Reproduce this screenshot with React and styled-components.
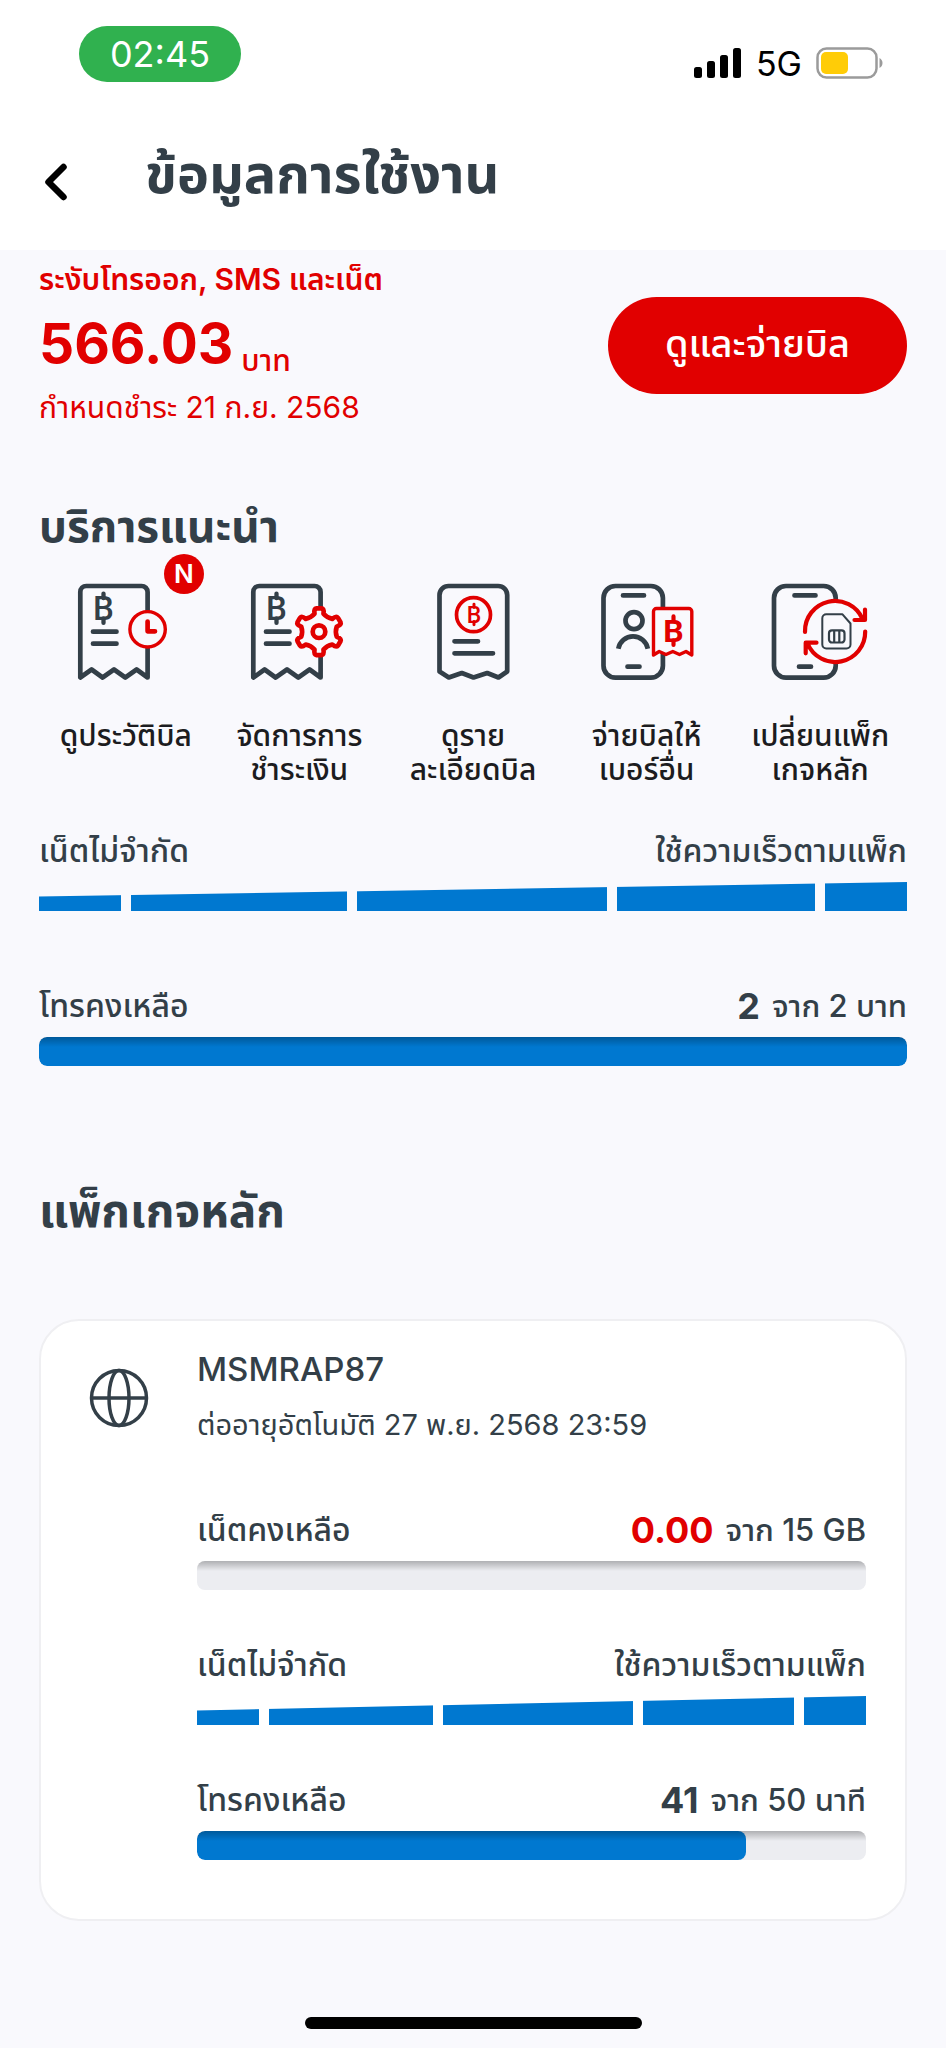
import React from 'react';
import styled, { createGlobalStyle } from 'styled-components';

const GlobalStyle = createGlobalStyle`
    * {
        box-sizing: border-box;
    }
    body {
        margin: 0;
        background: #f9f9fd;
        color: #333f48;
        font-family: Inter, "Noto Sans Thai", "Noto Sans", sans-serif;
    }
    h1, h2, h3, p {
        margin: 0;
    }
    button {
        border: 0;
        padding: 0;
        background: none;
        font-family: inherit;
        cursor: pointer;
    }
`;

const TopArea = styled.header`
    background: #fff;
`;

const StatusBar = styled.div`
    display: flex;
    justify-content: space-between;
    padding: 26px 63px 0 79px;
`;

const Clock = styled.div`
    width: 162px;
    border-radius: 28px;
    background: #30b14f;
    color: #fff;
    font-size: 36px;
    line-height: 56px;
    text-align: center;
`;

const Signals = styled.div`
    display: flex;
    align-items: center;
    gap: 14px;
    height: 34px;
    margin-top: 20px;
    color: #000;
    font-size: 34px;
`;

const TitleBar = styled.div`
    display: flex;
    align-items: center;
    height: 168px;
    padding: 0 39px;
    gap: 72px;
`;

const BackButton = styled.button`
    display: flex;
    width: 34px;
    height: 40px;
    margin-top: 32px;
`;

const Title = styled.h1`
    font-size: 54px;
    line-height: 72px;
    margin-top: 16px;
`;

const Main = styled.main`
    padding: 10px 39px 0;
`;

const Bill = styled.section`
    display: flex;
    justify-content: space-between;
    align-items: center;
    color: #e10000;
`;

const BillText = styled.p`
    font-size: 30px;
    font-weight: ${props => props.$strong ? 600 : 400};
    line-height: 38px;
`;

const Amount = styled.p`
    display: flex;
    align-items: flex-end;
    gap: 8px;
    font-size: 55px;
    font-weight: 700;
    line-height: 90px;
`;

const Unit = styled.span`
    font-size: 30px;
    font-weight: 500;
    line-height: 56px;
`;

const PayButton = styled.button`
    width: 299px;
    height: 97px;
    margin-top: 4px;
    border-radius: 49px;
    background: #e10000;
    color: #fff;
    font-size: 38px;
    font-weight: 500;
`;

const SectionTitle = styled.h2`
    margin-top: ${props => props.$large ? 116 : 72}px;
    font-size: ${props => props.$large ? 46 : 44}px;
    line-height: 56px;
`;

const Services = styled.div`
    display: grid;
    grid-template-columns: repeat(5, 1fr);
    align-items: start;
    margin: 28px 0 46px;
`;

const ServiceButton = styled.button`
    display: flex;
    flex-direction: column;
    align-items: center;
    gap: 36px;
    color: #1c1c20;
    font-size: 30px;
    font-weight: 500;
    line-height: 34px;
`;

const IconBox = styled.span`
    position: relative;
    width: 120px;
    height: 100px;
`;

const NewBadge = styled.span`
    position: absolute;
    top: -28px;
    right: -18px;
    width: 40px;
    border-radius: 50%;
    background: #e10000;
    color: #fff;
    font-size: 26px;
    font-weight: 600;
    line-height: 40px;
`;

const ServiceLabel = styled.span`
    white-space: pre-line;
`;

const MeterList = styled.div`
    display: flex;
    flex-direction: column;
    gap: ${props => props.$gap}px;
`;

const MeterHead = styled.div`
    display: flex;
    justify-content: space-between;
    margin-bottom: 12px;
    font-size: 32px;
    font-weight: 500;
    line-height: 38px;
`;

const MeterValue = styled.span`
    display: flex;
    gap: 12px;
    font-size: 31px;
`;

const Remaining = styled.b`
    color: ${props => props.$empty ? '#e10000' : '#333f48'};
    font-size: 36px;
    font-weight: 700;
`;

const Track = styled.div`
    position: relative;
    height: 29px;
    border-radius: 8px;
    background: #ecedf1;
    overflow: hidden;
    &::after {
        content: "";
        position: absolute;
        inset: 0 0 auto;
        height: 10px;
        background: linear-gradient(rgba(0, 0, 0, 0.26), rgba(0, 0, 0, 0));
    }
`;

const Fill = styled.div`
    height: 100%;
    border-radius: 8px;
    background: #0078d0;
`;

const Slope = styled.div`
    display: grid;
    grid-template-columns: 82fr 217fr 251fr 199fr 82fr;
    gap: 10px;
    height: 29px;
    clip-path: polygon(0 50%, 100% 0, 100% 100%, 0 100%);
`;

const SlopePart = styled.span`
    background: #0078d0;
`;

const PackageCard = styled.article`
    display: flex;
    gap: 48px;
    margin-top: 81px;
    padding: 26px 39px 59px 48px;
    border: 2px solid #efeff2;
    border-radius: 40px;
    background: #fff;
`;

const GlobeBox = styled.div`
    width: 60px;
    padding-top: 21px;
`;

const PackageBody = styled.div`
    flex: 1;
`;

const PackageName = styled.h3`
    font-size: 33px;
    font-weight: 500;
    line-height: 44px;
`;

const Renewal = styled.p`
    margin: 14px 0 66px;
    font-size: 29px;
    line-height: 40px;
`;

const HomeIndicator = styled.div`
    width: 337px;
    height: 12px;
    margin: 96px auto 19px;
    border-radius: 6px;
    background: #000;
`;

const DARK = '#333f48';
const RED = '#e10000';
const PAGE = '#f9f9fd';

const BahtMark = ({ x, y, size, color, weight = 500 }) => {
    const cap = size * 0.71;
    return (
        <g>
            <text x={x} y={y} fill={color} fontFamily="Roboto, sans-serif" fontSize={size} fontWeight={weight} textAnchor="middle">B</text>
            <path d={`M${x} ${y - cap - size * 0.09}v${size * 0.14}M${x} ${y - size * 0.05}v${size * 0.14}`} stroke={color} strokeWidth={size * 0.13} strokeLinecap="round" />
        </g>
    );
};

const IconSvg = ({ children }) => (
    <svg width="120" height="100" viewBox="0 0 120 100" fill="none" stroke={DARK} strokeWidth="4.7" strokeLinejoin="round" aria-hidden="true">
        {children}
    </svg>
);

const TornReceipt = () => (
    <>
        <path d="M14.300 95.500V10a6 6 0 0 1 6-6h55.300a6 6 0 0 1 6 6V95.500L70.600 87.500 59.300 95.500 48 87.500 36.600 95.500 25.600 87.500Z" />
        <path d="M27 49.700H50.500M27 61.700H50.500" strokeLinecap="round" />
        <g stroke="none"><BahtMark x={37.5} y={38} size={33} color={DARK} /></g>
    </>
);

const HistoryIcon = () => (
    <IconSvg>
        <TornReceipt />
        <circle cx="81.600" cy="47.300" r="17.700" fill={PAGE} stroke={RED} strokeWidth="3.400" />
        <path d="M81.600 39.500V49.300H89" stroke={RED} strokeLinecap="round" />
    </IconSvg>
);

const polar = (radius, angle) => {
    const rad = (angle * Math.PI) / 180;
    return `${(80 + radius * Math.cos(rad)).toFixed(2)} ${(49.7 + radius * Math.sin(rad)).toFixed(2)}`;
};

// six teeth, one every 60 degrees
const gearPath = [0, 1, 2, 3, 4, 5].map(i => {
    const a = -90 + i * 60;
    return `${i ? 'L' : 'M'}${polar(18.5, a - 14)}Q${polar(23.5, a - 13)} ${polar(23.5, a - 6)}L${polar(23.5, a + 6)}Q${polar(23.5, a + 13)} ${polar(18.5, a + 14)}Q${polar(16, a + 30)} ${polar(18.5, a + 46)}`;
}).join('') + 'Z';

const SettingIcon = () => (
    <IconSvg>
        <TornReceipt />
        <path d={gearPath} fill={PAGE} stroke={RED} />
        <circle cx="80" cy="49.700" r="6.300" stroke={RED} />
    </IconSvg>
);

const DetailIcon = () => (
    <IconSvg>
        <path d="M26.500 89.500V13a9 9 0 0 1 9-9h49.700a9 9 0 0 1 9 9V89.500L85.500 95.500 74.200 91 60.500 95.500 48.800 91 35.800 95.500Z" />
        <circle cx="60.500" cy="32.700" r="17" stroke={RED} strokeWidth="3.700" />
        <path d="M41.500 59.300H65M41.500 71.300H80" strokeLinecap="round" />
        <g stroke="none"><BahtMark x={61} y={40.7} size={23} color={RED} /></g>
    </IconSvg>
);

const PayOtherIcon = () => (
    <IconSvg>
        <rect x="16.500" y="4" width="59.400" height="91.700" rx="12" />
        <path d="M36 13.400H57M40.500 84.700H52.500" strokeLinecap="round" />
        <circle cx="47" cy="38.700" r="8.500" />
        <path d="M31.300 66.700a15 15 0 0 1 29.500 0" />
        <path d="M66.500 73V29.500a3 3 0 0 1 3-3h32.300a3 3 0 0 1 3 3V73L99 69.500 92.500 72.500 85.800 69.500 79 72.500 72.200 69.500Z" fill={PAGE} stroke={RED} strokeWidth="3.400" />
        <g stroke="none"><BahtMark x={86.5} y={60} size={32} color={RED} weight={700} /></g>
    </IconSvg>
);

const ChangeIcon = () => (
    <IconSvg>
        <rect x="14" y="4" width="61.700" height="91.700" rx="12" />
        <path d="M34.500 13.400H55.500M39 84.700H51" strokeLinecap="round" />
        <circle cx="75" cy="49.300" r="29" fill={PAGE} stroke="none" />
        <g stroke={RED} strokeWidth="4.200" strokeLinecap="round">
            <path d="M45 50A30 30 0 0 1 102.500 37M105 27.500V38H94.500" />
            <path d="M105.200 49.500A30 30 0 0 1 47.500 61.500M56.500 60.700H45.700V71.300" />
        </g>
        <path d="M66.300 32.300H82.500L90.500 41.500V62.500a4 4 0 0 1-4 4H66.300a4 4 0 0 1-4-4V36.300a4 4 0 0 1 4-4Z" strokeWidth="2" />
        <path d="M72 48.300H81.500a3 3 0 0 1 3 3V57.500a3 3 0 0 1-3 3H72a3 3 0 0 1-3-3V51.300a3 3 0 0 1 3-3ZM74.200 48.300V60.500M79.300 48.300V60.500" strokeWidth="2.200" />
    </IconSvg>
);

const services = [
    { label: 'ดูประวัติบิล', icon: <HistoryIcon />, isNew: true },
    { label: 'จัดการการ\nชำระเงิน', icon: <SettingIcon /> },
    { label: 'ดูราย\nละเอียดบิล', icon: <DetailIcon /> },
    { label: 'จ่ายบิลให้\nเบอร์อื่น', icon: <PayOtherIcon /> },
    { label: 'เปลี่ยนแพ็ก\nเกจหลัก', icon: <ChangeIcon /> },
];

const Meter = ({ label, left, total, unit, value, max }) => (
    <div>
        <MeterHead>
            <span>{label}</span>
            <MeterValue>
                <Remaining $empty={value === 0}>{left}</Remaining>
                <span>จาก {total} {unit}</span>
            </MeterValue>
        </MeterHead>
        <Track role="progressbar" aria-label={label} aria-valuenow={value} aria-valuemax={max}>
            <Fill style={{ width: `${(value / max) * 100}%` }} />
        </Track>
    </div>
);

const UnlimitedMeter = () => (
    <div>
        <MeterHead>
            <span>เน็ตไม่จำกัด</span>
            <span>ใช้ความเร็วตามแพ็ก</span>
        </MeterHead>
        <Slope>
            <SlopePart />
            <SlopePart />
            <SlopePart />
            <SlopePart />
            <SlopePart />
        </Slope>
    </div>
);

const App = () => {
    return (
        <div lang="th">
            <GlobalStyle />
            <TopArea>
                <StatusBar>
                    <Clock>02:45</Clock>
                    <Signals>
                        <svg width="48" height="30" viewBox="0 0 48 30" aria-hidden="true">
                            <rect x="0" y="19" width="8" height="11" rx="2.500" />
                            <rect x="13" y="13" width="8" height="17" rx="2.500" />
                            <rect x="26" y="7" width="8" height="23" rx="2.500" />
                            <rect x="39" y="0" width="8" height="30" rx="2.500" />
                        </svg>
                        <span>5G</span>
                        <svg width="67" height="32" viewBox="0 0 67 32" aria-hidden="true">
                            <rect x="1.500" y="1.500" width="59" height="29" rx="9" fill="none" stroke="#9b9b9b" strokeWidth="2.500" />
                            <rect x="5" y="5" width="27" height="22" rx="5" fill="#ffcc07" />
                            <path d="M63.500 11c4 2 4 8 0 10Z" fill="#9b9b9b" />
                        </svg>
                    </Signals>
                </StatusBar>
                <TitleBar>
                    <BackButton aria-label="กลับ">
                        <svg width="34" height="40" viewBox="0 0 34 40" fill="none" stroke="#000" strokeWidth="6.500" strokeLinecap="round" strokeLinejoin="round">
                            <path d="M24.500 5 9.500 20 24.500 35" />
                        </svg>
                    </BackButton>
                    <Title>ข้อมูลการใช้งาน</Title>
                </TitleBar>
            </TopArea>
            <Main>
                <Bill>
                    <div>
                        <BillText $strong>ระงับโทรออก, SMS และเน็ต</BillText>
                        <Amount>566.03 <Unit>บาท</Unit></Amount>
                        <BillText>กำหนดชำระ 21 ก.ย. 2568</BillText>
                    </div>
                    <PayButton>ดูและจ่ายบิล</PayButton>
                </Bill>

                <SectionTitle>บริการแนะนำ</SectionTitle>
                <Services>
                    {services.map(item => (
                        <ServiceButton key={item.label}>
                            <IconBox>
                                {item.icon}
                                {item.isNew ? <NewBadge>N</NewBadge> : null}
                            </IconBox>
                            <ServiceLabel>{item.label}</ServiceLabel>
                        </ServiceButton>
                    ))}
                </Services>

                <MeterList $gap={76}>
                    <UnlimitedMeter />
                    <Meter label="โทรคงเหลือ" left="2" total="2" unit="บาท" value={2} max={2} />
                </MeterList>

                <SectionTitle $large>แพ็กเกจหลัก</SectionTitle>
                <PackageCard>
                    <GlobeBox>
                        <svg width="60" height="60" viewBox="0 0 60 60" fill="none" stroke={DARK} strokeWidth="3.500" aria-hidden="true">
                            <circle cx="30" cy="30" r="27.500" />
                            <ellipse cx="30" cy="30" rx="10" ry="27.500" />
                            <path d="M2.500 30H57.500" />
                        </svg>
                    </GlobeBox>
                    <PackageBody>
                        <PackageName>MSMRAP87</PackageName>
                        <Renewal>ต่ออายุอัตโนมัติ 27 พ.ย. 2568 23:59</Renewal>
                        <MeterList $gap={56}>
                            <Meter label="เน็ตคงเหลือ" left="0.00" total="15" unit="GB" value={0} max={15} />
                            <UnlimitedMeter />
                            <Meter label="โทรคงเหลือ" left="41" total="50" unit="นาที" value={41} max={50} />
                        </MeterList>
                    </PackageBody>
                </PackageCard>
            </Main>
            <HomeIndicator />
        </div>
    );
}
export default App;
